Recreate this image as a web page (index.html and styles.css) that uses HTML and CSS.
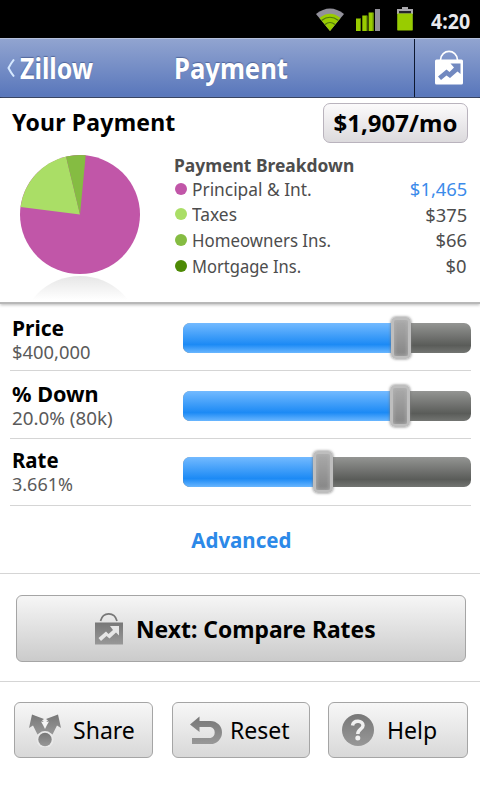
FILE: index.html
```html
<!DOCTYPE html>
<html lang="en">
<head>
  <meta charset="UTF-8">
  <title>Payment</title>
  <link rel="stylesheet" href="styles.css">
</head>
<body>

  <div class="status-bar">
    <svg class="wifi" width="28" height="24" viewBox="0 0 28 24">
      <path d="M0 6Q14-5 28 6L14 23Z" fill="#92909a"/>
      <path d="M3.500 10Q14 1.500 24.500 10L14 23Z" fill="#99cc00"/>
      <path d="M5.500 12.500Q14 6 22.500 12.500M9 16.500Q14 12.500 19 16.500" fill="none" stroke="#4f7510" stroke-width="1.200"/>
    </svg>
    <svg class="signal" width="24" height="23" viewBox="0 0 24 23">
      <path d="M0 9.500h5V22H0zM6.300 6.500h5V22h-5zM12.600 3.500h5V22h-5z" fill="#99cc00"/>
      <path d="M4.500 10v12M10.800 7v15M17.100 4v18" stroke="#648c05"/>
      <path d="M19 0h5v22h-5z" fill="#92909a"/>
    </svg>
    <svg class="battery" width="18" height="24" viewBox="0 0 18 24">
      <path d="M6 0h6v2h5v5H1V2h5z" fill="#a9a8ad"/>
      <rect x="3" y="4" width="12" height="2.500" fill="#26252a"/>
      <rect x="1" y="6.500" width="16" height="17" rx="1" fill="#99cc00"/>
      <path d="M1.500 7v16M16.500 7v16" stroke="#74a00a"/>
    </svg>
    <span class="clock">4:20</span>
  </div>

  <div class="nav">
    <a class="back">
      <svg width="8" height="18" viewBox="0 0 8 18"><path d="M7 .5Q3.500 5 1.500 9Q3.500 13 7 17.500" fill="none" stroke="#d5e8ff" stroke-width="2"/></svg>
      <span>Zillow</span>
    </a>
    <h1>Payment</h1>
    <a class="rates">
      <svg width="28" height="35" viewBox="0 0 28 35">
        <path d="M5.500 10C6 -1.500 22 -1.500 22.500 10" fill="none" stroke="#fff" stroke-width="1.700"/>
        <rect y="9.500" width="28" height="25" rx="1.500" fill="#fff"/>
        <path d="M3 26.500L11.500 19.500L14.500 22L19 17.500L15.500 13.500H25.500V24L22.500 21.500L15 28L11.500 25.500L6 30Z" fill="#7289c0"/>
      </svg>
    </a>
  </div>

  <div class="summary">
    <div class="total">
      <h2>Your Payment</h2>
      <span class="amount">$1,907/mo</span>
    </div>
    <div class="details">
      <svg class="pie" width="120" height="147" viewBox="0 0 120 147">
        <defs>
          <linearGradient id="reflection" x1="0" y1="0" x2="0" y2="1">
            <stop offset="0" stop-color="#e6e6e6"/>
            <stop offset=".2" stop-color="#fff"/>
          </linearGradient>
        </defs>
        <circle cx="60" cy="181" r="60" fill="url(#reflection)"/>
        <ellipse cx="60" cy="59.600" rx="60" ry="59.500" fill="#c156a8"/>
        <path d="M60 59.600L.5 52A60 59.500 0 0 1 46 1.600Z" fill="#aade66"/>
        <path d="M60 59.600L46 1.600A60 59.500 0 0 1 65.700 .3Z" fill="#85bc42"/>
      </svg>
      <div class="breakdown">
        <h3>Payment Breakdown</h3>
        <ul>
          <li><i class="dot principal"></i><span class="label l1">Principal &amp; Int.</span><span class="value link">$1,465</span></li>
          <li><i class="dot taxes"></i><span class="label l2">Taxes</span><span class="value">$375</span></li>
          <li><i class="dot home"></i><span class="label l3">Homeowners Ins.</span><span class="value">$66</span></li>
          <li><i class="dot mortgage"></i><span class="label l4">Mortgage Ins.</span><span class="value">$0</span></li>
        </ul>
      </div>
    </div>
  </div>

  <div class="sliders">
    <div class="row price">
      <div class="text"><b>Price</b><span>$400,000</span></div>
      <div class="track"><div class="fill" style="width: 218px"></div><div class="thumb" style="left: 208px"></div></div>
    </div>
    <div class="row down">
      <div class="text"><b>% Down</b><span>20.0% (80k)</span></div>
      <div class="track"><div class="fill" style="width: 217px"></div><div class="thumb" style="left: 207px"></div></div>
    </div>
    <div class="row rate">
      <div class="text"><b>Rate</b><span>3.661%</span></div>
      <div class="track"><div class="fill" style="width: 140px"></div><div class="thumb" style="left: 130px"></div></div>
    </div>
  </div>

  <a class="advanced"><span>Advanced</span></a>

  <div class="next">
    <button class="button">
      <svg width="28" height="32" viewBox="0 0 28 32">
        <defs>
          <linearGradient id="gray" x1="0" y1="0" x2="0" y2="1">
            <stop offset="0" stop-color="#777"/>
            <stop offset="1" stop-color="#989898"/>
          </linearGradient>
        </defs>
        <path d="M5.500 8C8-1.500 19.500-1.500 22 8" fill="none" stroke="#777" stroke-width="1.700"/>
        <rect y="9.500" width="28" height="22" fill="url(#gray)"/>
        <path d="M3.500 25L11 18.500L13.500 21L18 17L15 13H24V22.500L21 19.500L14.500 25.500L11.500 23L6 28Z" fill="#e6e6e6"/>
      </svg>
      <span>Next: Compare Rates</span>
    </button>
  </div>

  <div class="actions">
    <button class="button share">
      <svg width="32" height="33" viewBox="0 0 32 33">
        <path d="M3 .5L15 5L13 6.500L16 9L19 6.500L17 5L29 .5L32 14L28 11.500L23.500 20.500Q16 15 8.500 20.500L4 11.500L0 14Z" fill="url(#gray)"/>
        <path d="M12 7.500L14.500 8L16 6L17.500 8L20 7.500L18 11L16 15L14 11Z" fill="#f4f4f4"/>
        <circle cx="16" cy="25.500" r="8.500" fill="#e9e9e9"/>
        <circle cx="16" cy="25.500" r="6.700" fill="url(#gray)"/>
      </svg>
      <span>Share</span>
    </button>
    <button class="button reset">
      <svg width="32" height="29" viewBox="0 0 32 29">
        <path d="M0 8.500L9.500 .5V5H20.500A11.500 11.500 0 0 1 20.500 28H2V22H20.500A5.700 5.700 0 0 0 20.500 11H9.500V16Z" fill="url(#gray)"/>
      </svg>
      <span>Reset</span>
    </button>
    <button class="button help">
      <svg width="32" height="32" viewBox="0 0 32 32">
        <circle cx="16" cy="16" r="16" fill="url(#gray)"/>
        <path d="M10.500 11.500C11.500 5.500 21 6 21 11.500C21 15.500 15.800 15 15.800 20" fill="none" stroke="#f0f0f0" stroke-width="3.500"/>
        <circle cx="15.800" cy="24" r="2.500" fill="#f0f0f0"/>
      </svg>
      <span>Help</span>
    </button>
  </div>

</body>
</html>
```

FILE: styles.css
```css
* {
  box-sizing: border-box;
}

body {
  margin: 0;
  padding: 0;
  width: 480px;
  height: 800px;
  overflow: hidden;
  background: #fff;
  color: #000;
  font-family: "Noto Sans", "Open Sans", sans-serif;
}

h1, h2, h3, ul {
  margin: 0;
  padding: 0;
}

svg {
  display: block;
  flex: none;
}

span, b, h1, h2, h3 {
  white-space: nowrap;
  transform-origin: left;
}

.status-bar {
  display: flex;
  align-items: center;
  height: 38px;
  padding-left: 316px;
  background: #000;
}

.wifi {
  margin-top: 2px;
}

.signal {
  margin-left: 12px;
  margin-top: 2px;
}

.battery {
  margin-left: 16px;
}

.clock {
  margin-left: 17px;
  margin-top: 1px;
  color: #e8e8ec;
  font-size: 22px;
  font-weight: bold;
  transform: scaleX(.89);
}

.nav {
  display: flex;
  height: 60px;
  border-top: 1px solid #b4bfdb;
  border-bottom: 1px solid #1e2c4f;
  background: linear-gradient(#91a4d0, #5876bb);
  color: #fff;
  text-shadow: 0 -1px 1px rgba(40, 60, 110, .5);
}

.back {
  display: flex;
  align-items: center;
  width: 174px;
  padding-left: 7px;
  font-size: 28px;
  font-weight: bold;
}

.back span {
  margin-left: 5px;
  transform: scaleX(.89);
}

.nav h1 {
  flex: 1;
  font-size: 28px;
  line-height: 58px;
  transform: scaleX(.915);
}

.rates {
  width: 66px;
  padding: 11px 0 0 20px;
  border-left: 1px solid #0d1830;
}

.summary {
  height: 206px;
  border-bottom: 2px solid #b8b8b8;
  box-shadow: 0 1px 3px #bbb;
}

.total {
  display: flex;
  justify-content: space-between;
  height: 53px;
  padding: 5px 12px 0;
}

.total h2 {
  font-size: 23px;
  line-height: 39px;
  letter-spacing: .2px;
}

.amount {
  width: 145px;
  height: 40px;
  border: 1px solid #b9b3bd;
  border-radius: 7px;
  background: linear-gradient(#fbfafb, #dcdadd);
  font-size: 24px;
  font-weight: bold;
  line-height: 37px;
  text-align: center;
}

.details {
  display: flex;
  height: 151px;
  padding: 0 13px 0 20px;
}

.pie {
  margin-top: 4px;
}

.breakdown {
  flex: 1;
  margin-left: 34px;
  padding-top: 2px;
  color: #4d4d4d;
}

.breakdown h3 {
  font-size: 18px;
  line-height: 25px;
  transform: scaleX(.967);
}

.breakdown ul {
  margin-top: -2px;
}

.breakdown li {
  display: flex;
  align-items: center;
  height: 25.6px;
  font-size: 18px;
}

.dot {
  width: 12px;
  height: 12px;
  margin: 0 5px 0 1px;
  border-radius: 50%;
}

.principal { background: #c156a8; }
.taxes { background: #aade66; }
.home { background: #85bc42; }
.mortgage { background: #4d8a05; }

.l1 { transform: scaleX(.963); }
.l2 { transform: scaleX(.965); }
.l3 { transform: scaleX(.936); }
.l4 { transform: scaleX(.918); }

.value {
  margin-left: auto;
  padding-top: 1px;
  transform: scaleX(1.02);
  transform-origin: right;
}

.link {
  color: #3b8bea;
}

.row {
  display: flex;
  align-items: center;
  height: 67px;
  margin: 0 9px 0 10px;
  border-bottom: 1px solid #d5d5d5;
}

.price {
  padding-top: 2px;
}

.down {
  height: 68px;
  padding-top: 3px;
}

.text {
  display: flex;
  flex-direction: column;
  align-items: flex-start;
  width: 173px;
  padding-left: 2px;
  font-size: 18px;
  line-height: 24px;
}

.price .text {
  padding-top: 3px;
}

.text b {
  font-size: 21px;
}

.text span {
  color: #5a5a5a;
}

.price span { transform: scaleX(1.02); }
.down b { transform: scaleX(1.03); }
.down span { transform: scaleX(1.045); }
.rate b { transform: scaleX(.97); }

.track {
  position: relative;
  flex: none;
  width: 288px;
  height: 30px;
  border-radius: 7px;
  background: linear-gradient(#949593, #5a5c59 75%, #737572);
}

.fill {
  height: 30px;
  border-radius: 7px 0 0 7px;
  background: linear-gradient(#73baff, #1c8af5 72%, #69b6ff);
}

.thumb {
  position: absolute;
  top: -6px;
  width: 20px;
  height: 42px;
  border: 3px solid #bebebe;
  border-radius: 5px;
  background: linear-gradient(#aaa, #858585);
  box-shadow: 0 0 3px #777, inset 0 0 4px #b5b5b5;
}

.advanced {
  display: block;
  height: 68px;
  padding-left: 2px;
  border-bottom: 1px solid #d5d5d5;
  color: #2c89e8;
  font-size: 21px;
  font-weight: bold;
  line-height: 68px;
  text-align: center;
}

.advanced span {
  display: inline-block;
  transform: scaleX(.975);
  transform-origin: center;
}

.button {
  display: flex;
  align-items: center;
  padding: 0;
  border: 1px solid #a5a5a5;
  border-radius: 6px;
  background: linear-gradient(#f7f7f7, #d8d8d8);
  color: #000;
  font-family: inherit;
  font-size: 24px;
}

.next {
  height: 108px;
  padding: 21px 14px 0 16px;
  border-bottom: 1px solid #d5d5d5;
}

.next .button {
  width: 450px;
  height: 67px;
  padding-left: 78px;
  background: linear-gradient(#f6f6f6, #cbcbcb);
  font-weight: bold;
}

.next span {
  margin-left: 13px;
  transform: scaleX(.952);
}

.actions {
  display: flex;
  padding: 20px 12px 0 14px;
}

.actions .button {
  height: 56px;
}

.actions span {
  padding-bottom: 2px;
  transform: scaleX(.96);
}

.actions .share {
  width: 139px;
  padding-left: 14px;
}

.actions .reset {
  width: 138px;
  margin-left: 19px;
  padding-left: 17px;
}

.actions .help {
  width: 140px;
  margin-left: 18px;
  padding-left: 13px;
}

.share span { margin-left: 12px; }
.reset span { margin-left: 8px; }
.help span { margin-left: 13px; }
```
